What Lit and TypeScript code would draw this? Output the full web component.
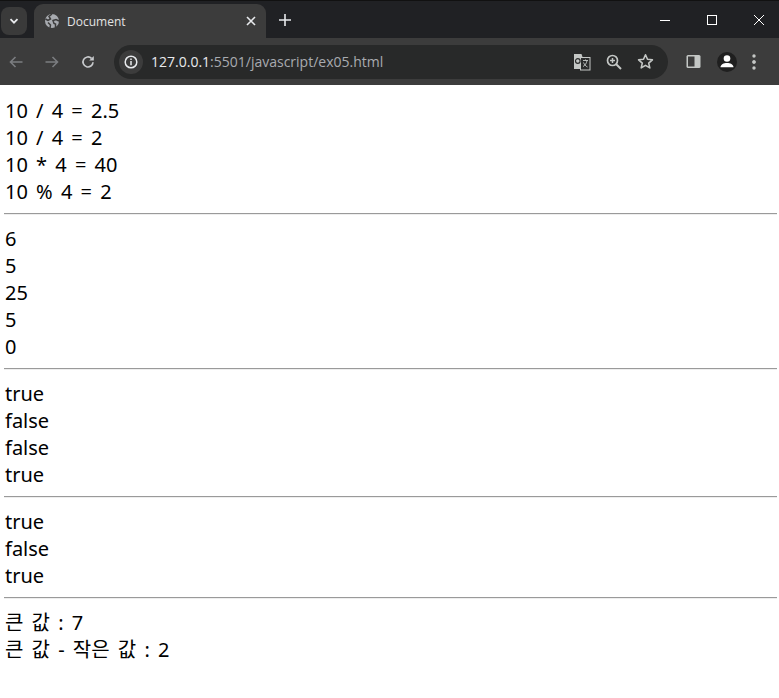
import { LitElement, css, html, svg } from "lit"
import { customElement } from "lit/decorators.js"

const groups = [
  ["10 / 4 = 2.5", "10 / 4 = 2", "10 * 4 = 40", "10 % 4 = 2"],
  ["6", "5", "25", "5", "0"],
  ["true", "false", "false", "true"],
  ["true", "false", "true"],
  ["큰 값 : 7", "큰 값 - 작은 값 : 2"],
]

const icon = (w: number, body: unknown, cls = "") =>
  html`<svg class=${cls} width=${w} height=${w} viewBox="0 0 ${w} ${w}" fill="none">${body}</svg>`

@customElement("app-root")
export class AppRoot extends LitElement {
  render() {
    return html`
      <div class="tabstrip">
        <div class="tabs-btn">
          ${icon(10, svg`<path d="M1.5 3.2 5 6.7l3.5-3.5" stroke="#e8eaed" stroke-width="1.8"/>`)}
        </div>
        <div class="tab">
          ${icon(16, svg`<circle cx="8" cy="8" r="7" fill="#a8abb0"/>
            <path d="M8 1 5 3.5 6.5 6 4 7.5 1.5 6M15 8l-3-1.5-3 1 1 3 1.5.5V15M6 15l.5-3L4 9.5" stroke="#3c3c3c" stroke-width="1.5"/>`)}
          <span class="title">Document</span>
          ${icon(10, svg`<path d="M1 1l8 8M9 1 1 9" stroke="#e8eaed" stroke-width="1.6"/>`, "tab-close")}
        </div>
        ${icon(12, svg`<path d="M6 0v12M0 6h12" stroke="#e8eaed" stroke-width="1.6"/>`, "new-tab")}
        <div class="window">
          ${icon(12, svg`<path d="M1 6.5h10" stroke="#fff"/>`)}
          ${icon(12, svg`<rect x="1.5" y="1.5" width="9" height="9" stroke="#fff"/>`)}
          ${icon(12, svg`<path d="M1 1l10 10M11 1 1 11" stroke="#fff"/>`)}
        </div>
      </div>
      <div class="toolbar">
        ${icon(16, svg`<path d="M14.5 8h-12M7.5 3 2.5 8l5 5" stroke="#7b7d80" stroke-width="1.6"/>`, "nav")}
        ${icon(16, svg`<path d="M1.5 8h12M8.5 3l5 5-5 5" stroke="#7b7d80" stroke-width="1.6"/>`, "nav")}
        ${icon(16, svg`<path d="M13 8.2A5 5 0 1 1 11.5 4.4" stroke="#c7c9cc" stroke-width="1.7"/><path d="M13.8 2v4.6H9.2z" fill="#c7c9cc"/>`, "nav")}
        <div class="omnibox">
          <div class="info">
            ${icon(14, svg`<circle cx="7" cy="7" r="5.8" stroke="#e8eaed" stroke-width="1.5"/><path d="M7 6v4.2M7 3.6v1.5" stroke="#e8eaed" stroke-width="1.5"/>`)}
          </div>
          <span class="url"><span class="host">127.0.0.1</span>:5501/javascript/ex05.html</span>
          <div class="omni-icons">
            ${icon(18, svg`<path d="M1 1h7.5l5 15H1z" fill="#c4c7c5"/>
              <rect x="7.5" y="4.5" width="9.500" height="12.500" fill="#2a2b2b" stroke="#c4c7c5"/>
              <path d="M10 7.500h5M12.500 6.500v1M14 7.500c-.5 3-2 5-4 6M10.500 9.500c.8 2 2 3.500 4 4.500" stroke="#c4c7c5" stroke-width=".9"/>
              <circle cx="4.800" cy="8" r="2.300" stroke="#2a2b2b" stroke-width="1.200"/>`)}
            ${icon(16, svg`<circle cx="6.500" cy="6.500" r="5" stroke="#c4c7c5" stroke-width="1.700"/>
              <path d="m10 10 5 5" stroke="#c4c7c5" stroke-width="1.900"/><path d="M6.500 4v5M4 6.500h5" stroke="#c4c7c5" stroke-width="1.500"/>`)}
            ${icon(17, svg`<path d="m8.500 1.800 2 4.500 4.900.5-3.700 3.300 1.100 4.800-4.300-2.500-4.300 2.500 1.100-4.800L1.600 6.800l4.900-.5z" stroke="#c4c7c5" stroke-width="1.600" stroke-linejoin="round"/>`)}
          </div>
        </div>
        ${icon(15, svg`<rect x=".5" y="1" width="14" height="13" rx="1.500" fill="#c4c7c5"/><rect x="2" y="2.500" width="6.500" height="10" fill="#3c3c3c"/>`, "panel")}
        <div class="avatar">
          ${icon(20, svg`<circle cx="10" cy="6.500" r="3.300" fill="#fff"/><path d="M3.500 15.200c0-2.700 3.300-4.200 6.500-4.200s6.500 1.500 6.500 4.200z" fill="#fff"/>`)}
        </div>
        ${icon(4, svg`<circle cx="2" cy="2" r="1.700" fill="#c4c7c5"/>`, "dot")}
      </div>
      <main>
        ${groups.map(
          (lines, i) => html`
            ${i > 0 ? html`<hr />` : ""}
            ${lines.map((l) => html`<div class="line">${l}</div>`)}
          `,
        )}
      </main>
    `
  }

  static styles = css`
    :host {
      display: block;
      font-family: "Noto Sans", "Noto Sans CJK KR", sans-serif;
      background: #fff;
      min-height: 698px;
    }
    svg {
      display: block;
      flex: none;
    }
    .tabstrip {
      height: 38px;
      box-sizing: border-box;
      background: #202124;
      border-top: 1px solid #111;
      display: flex;
      align-items: center;
      position: relative;
    }
    .tabs-btn {
      width: 26px;
      height: 28px;
      margin-left: 1px;
      margin-top: 3px;
      border-radius: 8px;
      background: #3a3a3a;
      display: flex;
      align-items: center;
      justify-content: center;
    }
    .tab {
      width: 232px;
      height: 34px;
      margin: 3px 0 0 7px;
      background: #3c3c3c;
      border-radius: 9px 9px 0 0;
      display: flex;
      align-items: center;
      padding: 0 10px;
      box-sizing: border-box;
      align-self: flex-end;
    }
    .title {
      margin-left: 7px;
      flex: 1;
      font: 12px "Open Sans", sans-serif;
      color: #e3e3e3;
    }
    .new-tab {
      margin: 0 0 0 13px;
    }
    .window {
      margin-left: auto;
      display: flex;
      gap: 35px;
      padding-right: 14px;
    }
    .toolbar {
      height: 47px;
      background: #3c3c3c;
      display: flex;
      align-items: center;
    }
    .nav {
      margin-left: 8px;
      margin-right: 12px;
    }
    .omnibox {
      margin-left: 6px;
      width: 554px;
      height: 34px;
      border-radius: 17px;
      background: #282929;
      display: flex;
      align-items: center;
      box-sizing: border-box;
      padding: 0 14px 0 5px;
    }
    .info {
      width: 24px;
      height: 24px;
      border-radius: 50%;
      background: #3c3c3c;
      display: flex;
      align-items: center;
      justify-content: center;
    }
    .url {
      margin-left: 8px;
      flex: 1;
      font: 14px "Open Sans", sans-serif;
      color: #a8abb0;
    }
    .host {
      color: #e8eaed;
    }
    .omni-icons {
      display: flex;
      align-items: center;
      gap: 15px;
    }
    .panel {
      margin-left: 18px;
    }
    .avatar {
      margin-left: 16px;
      width: 20px;
      height: 20px;
      border-radius: 50%;
      background: #1f1f1f;
    }
    .dot {
      margin-left: 15px;
      filter: drop-shadow(0 -6px 0 #c4c7c5) drop-shadow(0 6px 0 #c4c7c5);
    }
    main {
      padding: 12px 2px 0 4px;
      font-size: 20px;
      color: #000;
    }
    .line {
      height: 27px;
      line-height: 27px;
      padding-left: 1px;
      word-spacing: 3px;
    }
    hr {
      margin: 8px 0 10px;
      height: 2px;
      box-sizing: border-box;
      border: none;
      border-top: 1px solid #9a9a9a;
      border-bottom: 1px solid #eee;
      margin-top: 8px;
    }
  `
}

declare global {
  interface HTMLElementTagNameMap {
    "app-root": AppRoot
  }
}
